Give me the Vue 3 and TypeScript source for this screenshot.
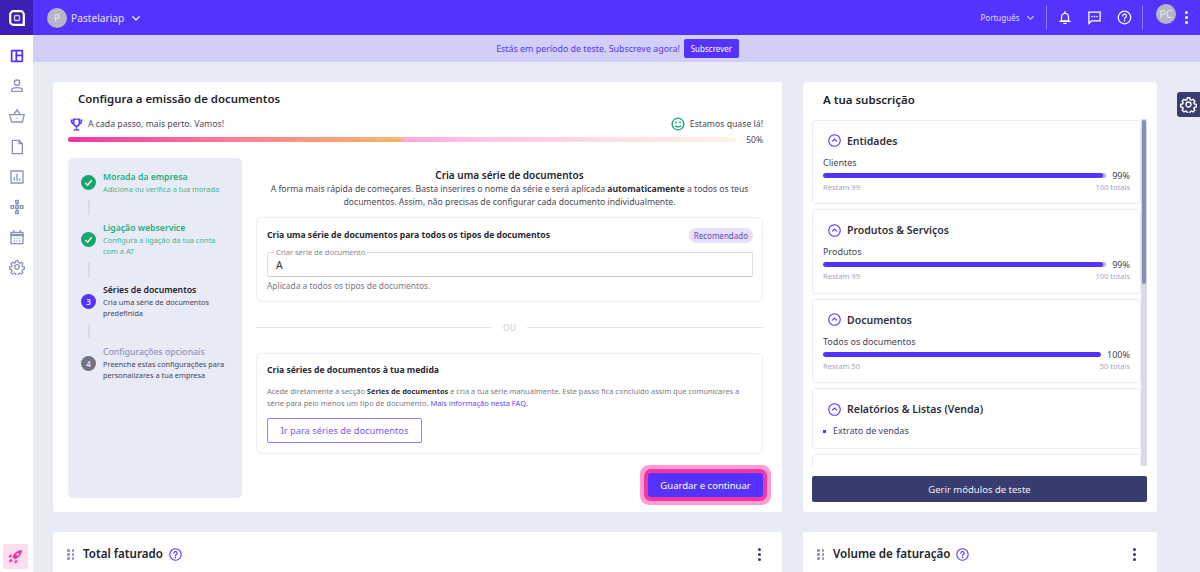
<script setup lang="ts">
interface Step {
  title: string;
  lines: string;
  state: "done" | "current" | "todo";
  num?: number;
}

interface Usage {
  title: string;
  label: string;
  percent: number;
  left: string;
  total: string;
}

const navIcons: string[][] = [
  ["M4 4h16v16H4z", "M11 4v16", "M11 11h9"],
  ["M12 3a4 4 0 1 1 0 8a4 4 0 0 1 0-8z", "M4 20v-2c0-2 2.500-3.500 8-3.500s8 1.500 8 3.500v2z"],
  ["M1 10h22l-3 11H4z", "M7 10l5-7", "M17 10l-5-7", "M12 15.500h.01"],
  ["M5 2h10l5 5v15H5z", "M15 2v5h5"],
  ["M3 3h18v18H3z", "M8 17v-4", "M12 17V8", "M16 17v-2"],
  ["M10 2h4v4h-4z", "M3 10h4v4H3z", "M10 10h4v4h-4z", "M17 10h4v4h-4z", "M10 18h4v4h-4z", "M12 6v4", "M12 14v4"],
  ["M3 5h18v17H3z", "M3 8h18", "M3 10h18", "M7 2v3", "M17 2v3", "M8 14h.01", "M12 14h.01", "M16 14h.01", "M8 18h.01", "M12 18h.01", "M16 18h.01"],
  [
    "M12 8.500a3.500 3.500 0 1 1 0 7a3.500 3.500 0 0 1 0-7z",
    "M10.300 2.500h3.400l.6 2.800 1.700.8 2.500-1.400 2.400 2.400-1.400 2.500.7 1.700 2.800.6v3.400l-2.800.6-.7 1.700 1.400 2.500-2.400 2.400-2.500-1.400-1.700.7-.6 2.800h-3.400l-.6-2.800-1.700-.7-2.500 1.400-2.400-2.400 1.400-2.500-.7-1.700-2.800-.6v-3.400l2.800-.6.7-1.700-1.400-2.500 2.400-2.400 2.500 1.400 1.700-.8z",
  ],
];

const steps: Step[] = [
  { title: "Morada da empresa", lines: "Adiciona ou verifica a tua morada", state: "done" },
  { title: "Ligação webservice", lines: "Configura a ligação da tua conta com a AT", state: "done" },
  { title: "Séries de documentos", lines: "Cria uma série de documentos predefinida", state: "current", num: 3 },
  { title: "Configurações opcionais", lines: "Preenche estas configurações para personalizares a tua empresa", state: "todo", num: 4 },
];

const usages: Usage[] = [
  { title: "Entidades", label: "Clientes", percent: 99, left: "Restam 99", total: "100 totais" },
  { title: "Produtos & Serviços", label: "Produtos", percent: 99, left: "Restam 99", total: "100 totais" },
  { title: "Documentos", label: "Todos os documentos", percent: 100, left: "Restam 50", total: "50 totais" },
];
</script>

<template>
  <div class="app">
    <header class="topbar">
      <div class="logo">
        <svg width="18" height="18" viewBox="0 0 18 18" fill="none">
          <path d="M5.500 2.200h7a3.300 3.300 0 0 1 3.300 3.300v10.300H5.500a3.300 3.300 0 0 1-3.300-3.300v-7a3.300 3.300 0 0 1 3.300-3.300z" stroke="#fff" stroke-width="2.200" />
          <rect x="6.500" y="6.500" width="5" height="5" rx="1" stroke="#d9d2ff" stroke-width="1.300" />
        </svg>
      </div>
      <div class="company">
        <span class="avatar">P</span>
        <span class="company-name">Pastelariap</span>
        <svg class="chev" width="10" height="10" viewBox="0 0 10 10" fill="none"><path d="M1.500 3.500L5 7l3.500-3.500" stroke="#fff" stroke-width="1.200" /></svg>
      </div>
      <div class="top-right">
        <span class="lang">Português</span>
        <svg width="9" height="9" viewBox="0 0 10 10" fill="none"><path d="M1.500 3.500L5 7l3.500-3.500" stroke="#dcd6ff" stroke-width="1.200" /></svg>
        <i class="divider first"></i>
        <svg class="top-icon" width="14" height="15" viewBox="0 0 24 24" fill="none" stroke="#fff" stroke-width="2.200" stroke-linecap="round">
          <path d="M6 18V11a6 6 0 0 1 12 0v7z" />
          <path d="M3 18.500h18" />
          <path d="M10 22h4" />
          <path d="M12 2v3" />
        </svg>
        <svg class="top-icon" width="15" height="15" viewBox="0 0 24 24" fill="none" stroke="#fff" stroke-width="2" stroke-linecap="round">
          <path d="M3 3.500h18v14H7l-4 4z" />
          <path d="M8 10.500h.01M12 10.500h.01M16 10.500h.01" stroke-width="2.600" />
        </svg>
        <svg class="top-icon" width="15" height="15" viewBox="0 0 24 24" fill="none" stroke="#fff" stroke-width="2" stroke-linecap="round">
          <circle cx="12" cy="12" r="10" />
          <path d="M9 9.500a3 3 0 1 1 4.500 2.600c-1 .6-1.500 1.200-1.500 2.400" />
          <path d="M12 17.500h.01" stroke-width="2.600" />
        </svg>
        <i class="divider last"></i>
        <span class="avatar user">PC</span>
        <span class="kebab white"><i></i><i></i><i></i></span>
      </div>
    </header>

    <div class="below">
      <aside class="sidebar">
        <nav class="nav">
          <svg
            v-for="(icon, i) in navIcons"
            :key="i"
            class="nav-icon"
            :class="{ active: i === 0 }"
            width="16"
            height="16"
            viewBox="0 0 24 24"
            fill="none"
            stroke-width="2"
            stroke-linecap="round"
            stroke-linejoin="round"
          >
            <path v-for="d in icon" :key="d" :d="d" />
          </svg>
        </nav>
        <div class="rocket">
          <svg width="15" height="15" viewBox="0 0 24 24" fill="#f535a5">
            <path d="M22.500 1.500c-5 0-9 2-12 5.500-2 2.500-3 4.500-3.500 6l3.500 3.500c1.500-.5 3.500-1.500 6-3.500 3.500-3 6-7 6-11.500z" />
            <path d="M6 8.500L2 10l-1 3.500 4.500-.5z" />
            <path d="M15.500 18L14 22l-3.500 1 .5-4.500z" />
            <path d="M5 16c-2 .5-3 2-3.500 5.500C5 21 6.500 20 7.500 18.500z" />
            <circle cx="15.500" cy="8.500" r="2" fill="#ffdcee" />
          </svg>
        </div>
      </aside>

      <main class="main">
        <div class="banner">
          <span>Estás em período de teste. Subscreve agora!</span>
          <button class="subscribe">Subscrever</button>
        </div>

        <div class="content">
          <section class="card setup">
            <h2 class="setup-title">Configura a emissão de documentos</h2>
            <div class="motto">
              <span class="motto-side">
                <svg class="trophy" width="13" height="13" viewBox="0 0 24 24" fill="none" stroke="#5533ff" stroke-width="2.600">
                  <path d="M7 2h10v8a5 5 0 0 1-10 0z" />
                  <path d="M7 4H2.500c0 4 1.500 6.500 4.500 7" />
                  <path d="M17 4h4.500c0 4-1.500 6.500-4.500 7" />
                  <path d="M12 15v5" />
                  <path d="M7 22h10" />
                </svg>
                A cada passo, mais perto. Vamos!
              </span>
              <span class="motto-side">
                <svg width="14" height="14" viewBox="0 0 24 24" fill="none" stroke="#19a974" stroke-width="2.400">
                  <circle cx="12" cy="12" r="10" />
                  <path d="M7 15c2.500 2.500 7.500 2.500 10 0" />
                  <path d="M7 9.500h3M14 9.500h3" />
                </svg>
                Estamos quase lá!
              </span>
            </div>
            <div class="progress-row">
              <div class="progress"><div class="progress-fill"></div></div>
              <span class="progress-num">50%</span>
            </div>

            <div class="setup-body">
              <ol class="steps">
                <template v-for="(step, i) in steps" :key="step.title">
                  <li class="step" :class="step.state">
                    <span class="dot">
                      <svg v-if="step.state === 'done'" width="9" height="9" viewBox="0 0 10 10" fill="none"><path d="M1.500 5.500L4 8l4.500-5.500" stroke="#fff" stroke-width="1.500" /></svg>
                      <template v-else>{{ step.num }}</template>
                    </span>
                    <div class="step-text">
                      <div class="step-title">{{ step.title }}</div>
                      <div class="step-sub">{{ step.lines }}</div>
                    </div>
                  </li>
                  <li v-if="i < steps.length - 1" class="connector"></li>
                </template>
              </ol>

              <div class="setup-main">
                <h3 class="intro-title">Cria uma série de documentos</h3>
                <p class="intro">
                  A forma mais rápida de começares. Basta inserires o nome da série e será aplicada <b>automaticamente</b> a todos os teus documentos. Assim, não precisas de configurar cada documento individualmente.
                </p>

                <div class="box first-box">
                  <div class="box-head">
                    <span class="box-title">Cria uma série de documentos para todos os tipos de documentos</span>
                    <span class="badge">Recomendado</span>
                  </div>
                  <div class="field">
                    <span class="field-label">Criar série de documento</span>
                    A
                  </div>
                  <div class="helper">Aplicada a todos os tipos de documentos.</div>
                </div>

                <div class="or"><i></i><span>OU</span><i></i></div>

                <div class="box second-box">
                  <div class="box-title">Cria séries de documentos à tua medida</div>
                  <p class="box-text">
                    Acede diretamente à secção <b>Séries de documentos</b> e cria a tua série manualmente. Este passo fica concluído assim que comunicares a série para pelo menos um tipo de documento. <a>Mais informação nesta FAQ.</a>
                  </p>
                  <button class="outline">Ir para séries de documentos</button>
                </div>

                <div class="actions">
                  <button class="primary">Guardar e continuar</button>
                </div>
              </div>
            </div>
          </section>

          <section class="card subs">
            <h2 class="subs-title">A tua subscrição</h2>
            <div class="subs-scroll">
              <div class="subs-list">
                <article v-for="u in usages" :key="u.title" class="module">
                  <div class="module-head">
                    <svg width="13" height="13" viewBox="0 0 14 14" fill="none" stroke="#5533ff" stroke-width="1.200">
                      <circle cx="7" cy="7" r="6.200" />
                      <path d="M4.500 8L7 5.500 9.500 8" />
                    </svg>
                    {{ u.title }}
                  </div>
                  <div class="module-label">{{ u.label }}</div>
                  <div class="bar-row">
                    <div class="bar"><div class="bar-fill" :style="{ width: u.percent + '%' }"></div></div>
                    <span class="bar-num">{{ u.percent }}%</span>
                  </div>
                  <div class="module-foot"><span>{{ u.left }}</span><span>{{ u.total }}</span></div>
                </article>
                <article class="module">
                  <div class="module-head">
                    <svg width="13" height="13" viewBox="0 0 14 14" fill="none" stroke="#5533ff" stroke-width="1.200">
                      <circle cx="7" cy="7" r="6.200" />
                      <path d="M4.500 8L7 5.500 9.500 8" />
                    </svg>
                    Relatórios &amp; Listas (Venda)
                  </div>
                  <div class="module-label bullet"><i></i>Extrato de vendas</div>
                </article>
                <article class="module empty"></article>
              </div>
              <div class="scrollbar"><div class="thumb"></div></div>
            </div>
            <button class="manage">Gerir módulos de teste</button>
          </section>

          <section class="card widget">
            <span class="grip"><i v-for="n in 6" :key="n"></i></span>
            <span class="widget-title">Total faturado</span>
            <svg width="13" height="13" viewBox="0 0 24 24" fill="none" stroke="#5533ff" stroke-width="2" stroke-linecap="round">
              <circle cx="12" cy="12" r="10.500" />
              <path d="M9 9.500a3 3 0 1 1 4.500 2.600c-1 .6-1.500 1.200-1.500 2.400" />
              <path d="M12 17.500h.01" stroke-width="2.600" />
            </svg>
            <span class="kebab"><i></i><i></i><i></i></span>
          </section>

          <section class="card widget">
            <span class="grip"><i v-for="n in 6" :key="n"></i></span>
            <span class="widget-title">Volume de faturação</span>
            <svg width="13" height="13" viewBox="0 0 24 24" fill="none" stroke="#5533ff" stroke-width="2" stroke-linecap="round">
              <circle cx="12" cy="12" r="10.500" />
              <path d="M9 9.500a3 3 0 1 1 4.500 2.600c-1 .6-1.500 1.200-1.500 2.400" />
              <path d="M12 17.500h.01" stroke-width="2.600" />
            </svg>
            <span class="kebab"><i></i><i></i><i></i></span>
          </section>
        </div>
      </main>
    </div>

    <div class="gear-tab">
      <svg width="17" height="17" viewBox="0 0 24 24" fill="none" stroke="#fff" stroke-width="2">
        <path d="M12 8.500a3.500 3.500 0 1 1 0 7a3.500 3.500 0 0 1 0-7z" />
        <path d="M10.300 2.500h3.400l.6 2.800 1.700.8 2.500-1.400 2.400 2.400-1.400 2.500.7 1.700 2.800.6v3.400l-2.800.6-.7 1.700 1.400 2.500-2.400 2.400-2.500-1.400-1.700.7-.6 2.800h-3.400l-.6-2.800-1.700-.7-2.500 1.400-2.400-2.400 1.400-2.500-.7-1.700-2.800-.6v-3.400l2.800-.6.7-1.700-1.400-2.500 2.400-2.400 2.500 1.400 1.700-.8z" />
      </svg>
    </div>
  </div>
</template>

<style>
html,
body {
  margin: 0;
  height: 100%;
  overflow: hidden;
}
</style>

<style scoped>
.app {
  position: relative;
  height: 572px;
  overflow: hidden;
  display: flex;
  flex-direction: column;
  background: #e8eaf6;
  font-family: "Noto Sans", sans-serif;
  color: #2a2a33;
}

h2,
h3,
p,
ol {
  margin: 0;
  padding: 0;
}

button {
  font-family: inherit;
  border: none;
  cursor: pointer;
}

/* top bar */
.topbar {
  flex: none;
  height: 35px;
  display: flex;
  align-items: center;
  background: #5533ff;
  color: #fff;
}

.logo {
  width: 33px;
  height: 35px;
  display: flex;
  align-items: center;
  justify-content: center;
  background: #3d1fb5;
}

.company {
  display: flex;
  align-items: center;
  margin-left: 14px;
}

.avatar {
  width: 20px;
  height: 20px;
  border-radius: 50%;
  background: #b9b6c4;
  color: #e9e7f2;
  font-size: 10px;
  display: flex;
  align-items: center;
  justify-content: center;
}

.company-name {
  margin-left: 4px;
  font-size: 10.200px;
  color: #e6e1ff;
}

.chev {
  margin-left: 7px;
}

.top-right {
  margin-left: auto;
  display: flex;
  align-items: center;
  padding-right: 12.500px;
  height: 35px;
}

.lang {
  font-size: 8px;
  color: #e0dbff;
  margin-right: 6px;
}

.divider {
  width: 1px;
  height: 25px;
  background: #8e78ff;
}

.divider.first {
  margin: 0 11px 0 11px;
}

.divider.last {
  margin: 0 13px 0 10.500px;
}

.top-icon {
  margin-right: 15px;
}

.top-icon:nth-of-type(4) {
  margin-right: 0;
}

.avatar.user {
  margin-top: -7px;
  font-size: 10.500px;
}

.kebab {
  display: flex;
  flex-direction: column;
  gap: 2px;
}

.kebab i {
  width: 3px;
  height: 3px;
  border-radius: 50%;
  background: #363b6b;
}

.kebab.white {
  margin-left: 8.500px;
}

.kebab.white i {
  background: #fff;
}

.below {
  flex: 1;
  min-height: 0;
  display: flex;
}

/* sidebar */
.sidebar {
  flex: none;
  width: 33px;
  background: #fff;
  display: flex;
  flex-direction: column;
  align-items: center;
}

.nav {
  display: flex;
  flex-direction: column;
  align-items: center;
  gap: 14.200px;
  padding-top: 13px;
}

.nav-icon {
  stroke: #8c92ba;
}

.nav-icon.active {
  stroke: #5533ff;
  stroke-width: 2.600;
}

.rocket {
  margin-top: auto;
  margin-bottom: 3px;
  align-self: flex-start;
  margin-left: 3px;
  width: 25px;
  height: 25px;
  border-radius: 2px;
  background: #ffdcee;
  display: flex;
  align-items: center;
  justify-content: center;
}

/* main */
.main {
  flex: 1;
  min-width: 0;
  display: flex;
  flex-direction: column;
}

.banner {
  flex: none;
  height: 27px;
  padding-left: 2px;
  display: flex;
  align-items: center;
  justify-content: center;
  gap: 4px;
  background: #d3cef8;
  color: #5533ff;
  font-size: 8.900px;
}

.subscribe {
  height: 19px;
  width: 55px;
  padding: 0;
  border-radius: 2px;
  background: #5533ff;
  color: #fff;
  font-size: 8px;
}

.content {
  padding: 20px 43px 0 20px;
  display: grid;
  grid-template-columns: 729px 354px;
  grid-template-rows: 430px auto;
  gap: 20px 21px;
}

.card {
  background: #fff;
  border-radius: 3px;
}

/* setup card */
.setup {
  padding: 0 19px 14px 15px;
  display: flex;
  flex-direction: column;
}

.setup-title {
  margin: 9px 0 0 10px;
  font-size: 11.400px;
  line-height: 15px;
  font-weight: 600;
  color: #23232b;
}

.motto {
  margin-top: 11px;
  display: flex;
  justify-content: space-between;
  font-size: 8.700px;
  line-height: 14px;
  color: #4a4a55;
}

.motto-side {
  display: flex;
  align-items: center;
  gap: 5px;
}

.trophy {
  margin-left: 2px;
}

.progress-row {
  margin-top: 1px;
  display: flex;
  align-items: center;
  height: 14px;
}

.progress {
  width: 668px;
  height: 5px;
  border-radius: 3px;
  overflow: hidden;
  background: linear-gradient(90deg, #ffa9da 50%, #ffc6e6 62%, #fff3e6 100%);
}

.progress-fill {
  width: 50%;
  height: 100%;
  background: linear-gradient(90deg, #f535a5, #ff7f93 50%, #ffb768);
}

.progress-num {
  margin-left: auto;
  font-size: 8.500px;
  color: #4a4a55;
}

.setup-body {
  flex: 1;
  min-height: 0;
  margin-top: 12px;
  display: flex;
}

.steps {
  flex: none;
  width: 174px;
  box-sizing: border-box;
  padding: 12px 16px 0 13px;
  list-style: none;
  background: #e8eaf6;
  border-radius: 5px;
}

.step {
  display: flex;
  align-items: center;
  gap: 7px;
}

.dot {
  flex: none;
  width: 15px;
  height: 15px;
  border-radius: 50%;
  display: flex;
  align-items: center;
  justify-content: center;
  color: #e6e3ff;
  font-size: 8px;
  font-weight: 600;
}

.step-title {
  font-size: 8.700px;
  line-height: 14px;
  font-weight: 600;
}

.step-sub {
  font-size: 7.400px;
  line-height: 11px;
}

.step.done .dot {
  background: #19a56e;
}

.step.done .step-title {
  color: #29ae7e;
}

.step.done .step-sub {
  color: #3fb890;
}

.step.current .dot {
  background: #5533ff;
}

.step.current .step-title {
  color: #23232b;
}

.step.current .step-sub,
.step.todo .step-sub {
  color: #45455a;
}

.step.todo .dot {
  background: #74747f;
}

.step.todo .step-title {
  color: #8f94bb;
  font-weight: 500;
}

.connector {
  width: 2px;
  height: 15px;
  margin: 5px 0 6px 6.500px;
  background: #d8dae9;
}

.setup-main {
  flex: 1;
  min-width: 0;
  margin-left: 14px;
  display: flex;
  flex-direction: column;
}

.intro-title {
  margin-top: 10px;
  text-align: center;
  font-size: 10px;
  line-height: 14px;
  font-weight: 600;
  color: #23232b;
}

.intro {
  margin-top: 1px;
  padding: 0 8px;
  text-align: center;
  font-size: 8.650px;
  line-height: 12.500px;
  color: #4a4a55;
}

.intro b,
.box-text b {
  font-weight: 700;
  color: #2f2f3a;
}

.box {
  border: 1px solid #eeeef2;
  border-radius: 6px;
  box-sizing: border-box;
}

.first-box {
  margin-top: 9px;
  height: 85px;
  padding: 10px 9px 0 10px;
}

.box-head {
  display: flex;
  align-items: center;
  justify-content: space-between;
  height: 15px;
}

.box-title {
  font-size: 8.650px;
  line-height: 15px;
  font-weight: 700;
  color: #2a2a33;
}

.badge {
  padding: 0 5px;
  height: 15px;
  line-height: 15px;
  border-radius: 8px;
  background: #e7e0fb;
  color: #6a45c9;
  font-size: 8px;
}

.field {
  position: relative;
  margin-top: 9px;
  height: 25px;
  box-sizing: border-box;
  padding-left: 8px;
  line-height: 25px;
  font-size: 10.500px;
  color: #33333d;
  border: 1px solid #dedee2;
  border-bottom-color: #c9c9cf;
  border-radius: 2px;
}

/* floating label sits over the field border */
.field-label {
  position: absolute;
  top: -6px;
  left: 6px;
  padding: 0 2px;
  background: #fff;
  font-size: 7.500px;
  line-height: 10px;
  color: #85858f;
}

.helper {
  margin-top: 2px;
  font-size: 8.400px;
  line-height: 14px;
  color: #7a7a85;
}

.or {
  height: 51px;
  display: flex;
  align-items: center;
  gap: 11px;
  font-size: 8.500px;
  color: #c8c9db;
}

.or i {
  flex: 1;
  height: 1px;
  background: #e3e3ee;
}

.second-box {
  height: 101px;
  padding: 9px 10px 0;
}

.box-text {
  margin-top: 7px;
  font-size: 7.450px;
  line-height: 12px;
  color: #7a7a85;
}

.box-text a {
  color: #6a45ff;
}

.outline {
  display: block;
  margin-top: 9px;
  width: 155px;
  height: 25px;
  box-sizing: border-box;
  padding: 0;
  background: #fff;
  border: 1px solid #9a7aff;
  border-radius: 2px;
  color: #7a55ff;
  font-size: 9.300px;
}

.actions {
  margin-top: auto;
  margin-bottom: 1px;
  display: flex;
  justify-content: flex-end;
}

.primary {
  width: 115px;
  height: 24px;
  padding: 0;
  border-radius: 3px;
  background: #5533ff;
  color: #fff;
  font-size: 9.500px;
  box-shadow: 0 0 0 4px #f535a5, 0 0 0 8px #ff9dd3;
}

/* subscription card */
.subs {
  padding: 0 10px 10px 9px;
  display: flex;
  flex-direction: column;
}

.subs-title {
  margin: 9px 0 0 11px;
  font-size: 11.500px;
  line-height: 17px;
  font-weight: 600;
  color: #23232b;
}

.subs-scroll {
  margin-top: 11px;
  height: 347px;
  display: flex;
  overflow: hidden;
}

.subs-list {
  flex: 1;
  min-width: 0;
  padding-top: 0.5px;
  display: flex;
  flex-direction: column;
  gap: 5px;
}

.module {
  flex: none;
  border: 1px solid #eeeef2;
  border-radius: 3px;
  padding: 12px 10px 9.500px;
}

.module.empty {
  height: 40px;
}

.module-head {
  display: flex;
  align-items: center;
  gap: 6px;
  padding-left: 5px;
  height: 16px;
  font-size: 10.500px;
  font-weight: 600;
  color: #2f2f3a;
}

.module-label {
  margin-top: 7px;
  font-size: 9px;
  line-height: 14px;
  color: #45455a;
}

.module-label.bullet {
  display: flex;
  align-items: center;
  gap: 7px;
}

.module-label.bullet i {
  width: 3px;
  height: 3px;
  background: #5533ff;
}

.bar-row {
  display: flex;
  align-items: center;
  height: 11px;
  gap: 6px;
}

.bar {
  flex: 1;
  height: 5px;
  border-radius: 3px;
  background: #b9abff;
  overflow: hidden;
}

.bar-fill {
  height: 100%;
  background: #5533ff;
  border-radius: 3px;
}

.bar-num {
  font-size: 9px;
  color: #45455a;
}

.module-foot {
  display: flex;
  justify-content: space-between;
  font-size: 7.500px;
  line-height: 13px;
  color: #a3a6c6;
}

.scrollbar {
  flex: none;
  width: 6px;
  background: #d8dae8;
  padding: 1px;
  box-sizing: border-box;
}

.thumb {
  height: 164px;
  background: #868db8;
  border-radius: 2px;
}

.manage {
  margin-top: 10px;
  height: 26px;
  padding: 0;
  background: #373d6e;
  border-radius: 2px;
  color: #f0f0f8;
  font-size: 9.500px;
}

/* bottom widgets */
.widget {
  height: 60px;
  box-sizing: border-box;
  padding: 13px 21px 0 14px;
  display: flex;
  align-items: flex-start;
  gap: 6px;
}

.grip {
  width: 7px;
  height: 18px;
  padding-top: 4px;
  box-sizing: border-box;
  display: grid;
  grid-template-columns: 2.500px 2.500px;
  grid-auto-rows: 2.500px;
  gap: 1.500px 2px;
  margin-right: 3px;
}

.grip i {
  background: #8c92ba;
  border-radius: 50%;
}

.widget-title {
  font-size: 11.600px;
  line-height: 18px;
  font-weight: 600;
  color: #23232b;
}

.widget svg {
  margin-top: 2.500px;
}

.widget .kebab {
  margin-left: auto;
  margin-top: 3px;
}

/* floating settings tab on the right edge */
.gear-tab {
  position: absolute;
  top: 92px;
  right: 0;
  width: 23px;
  height: 25px;
  display: flex;
  align-items: center;
  justify-content: center;
  background: #373d6e;
  border-radius: 3px 0 0 3px;
}
</style>
